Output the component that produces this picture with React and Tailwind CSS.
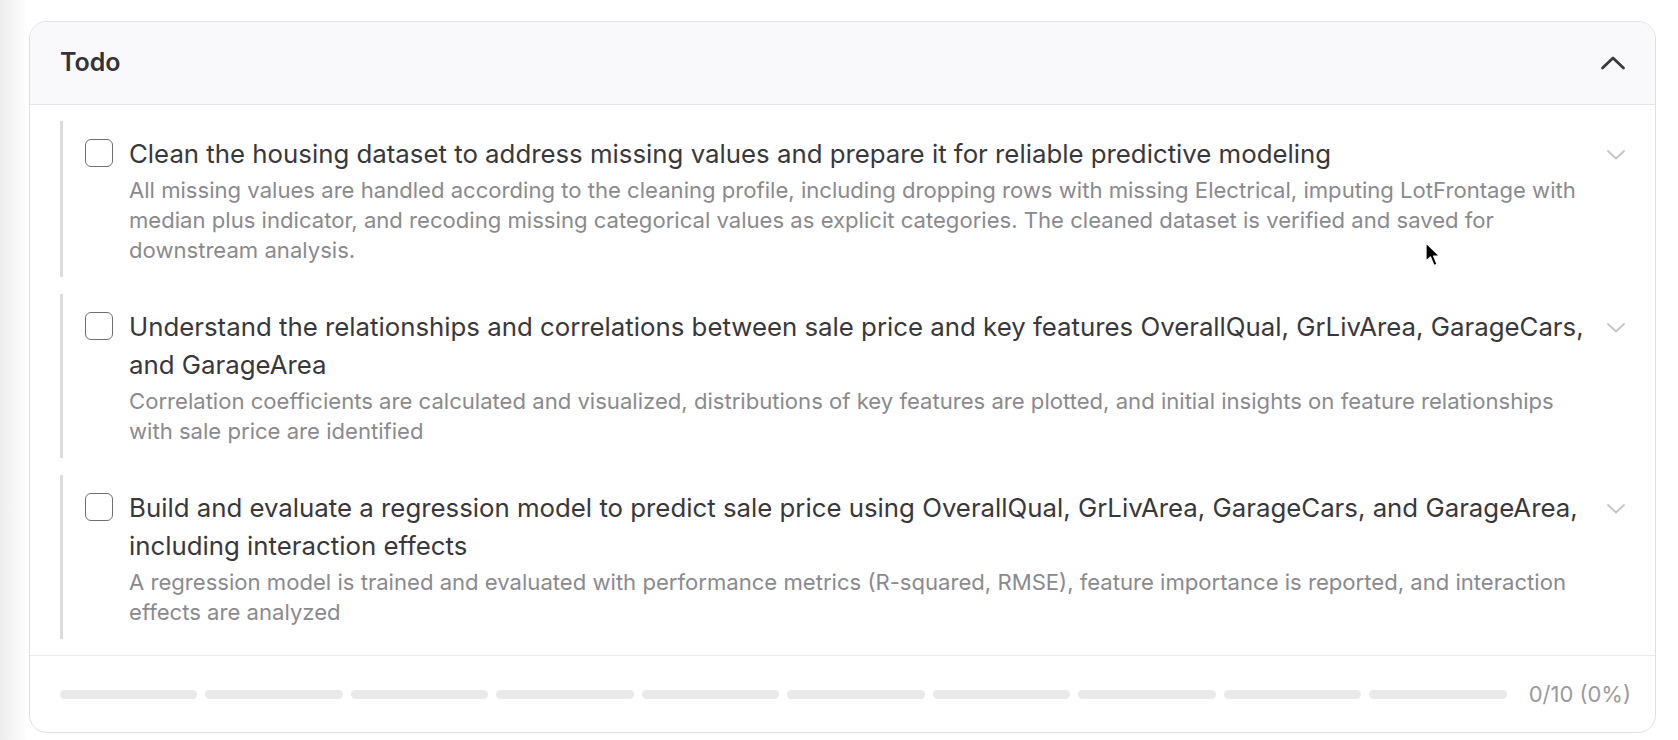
import React from "react";

const items = [
  {
    title:
      "Clean the housing dataset to address missing values and prepare it for reliable predictive modeling",
    desc:
      "All missing values are handled according to the cleaning profile, including dropping rows with missing Electrical, imputing LotFrontage with median plus indicator, and recoding missing categorical values as explicit categories. The cleaned dataset is verified and saved for downstream analysis.",
  },
  {
    title:
      "Understand the relationships and correlations between sale price and key features OverallQual, GrLivArea, GarageCars, and GarageArea",
    desc:
      "Correlation coefficients are calculated and visualized, distributions of key features are plotted, and initial insights on feature relationships with sale price are identified",
  },
  {
    title:
      "Build and evaluate a regression model to predict sale price using OverallQual, GrLivArea, GarageCars, and GarageArea, including interaction effects",
    desc:
      "A regression model is trained and evaluated with performance metrics (R-squared, RMSE), feature importance is reported, and interaction effects are analyzed",
  },
];

function ChevronDown() {
  return (
    <svg width="20" height="12" viewBox="0 0 20 12" fill="none">
      <path d="M2 2 L10 9.5 L18 2" stroke="#c4c4c8" strokeWidth="1.8" strokeLinecap="round" strokeLinejoin="round" />
    </svg>
  );
}

function ChevronUp() {
  return (
    <svg width="26" height="16" viewBox="0 0 26 16" fill="none">
      <path d="M2.5 13 L13 3 L23.5 13" stroke="#3a3a3e" strokeWidth="2.8" strokeLinecap="round" strokeLinejoin="round" />
    </svg>
  );
}

function Cursor() {
  return (
    <svg width="18" height="26" viewBox="0 0 18 26">
      <path d="M1 1 L1 19 L5.5 15 L9 23.5 L12 22.2 L8.6 14 L14.5 14 Z" fill="#000" stroke="#fff" strokeWidth="1.2" strokeLinejoin="round" />
    </svg>
  );
}

export default function App() {
  return (
    <div
      className="relative min-h-[740px] w-[1678px] bg-[linear-gradient(to_right,#ececec,#fafafa_20px,#ffffff_28px)] pl-[29px] pr-[22px] pt-[21px]"
      style={{ fontFamily: "Inter, 'Noto Sans', sans-serif" }}
    >
      <div className="overflow-hidden rounded-[18px] border border-[#e0e0e3] bg-white">
        <div className="flex h-[83px] items-center justify-between border-b border-[#e6e6e9] bg-[#f9f9fb] pl-[30px] pr-[29px]">
          <span className="text-[25px] font-semibold text-[#333336]">Todo</span>
          <ChevronUp />
        </div>

        <div className="flex flex-col gap-[17px] pl-[30px] pr-[29px] pt-[16px] pb-[16px]">
          {items.map((it, i) => (
            <div key={i} className="flex border-l-[3px] border-[#dcdcde] pb-[12px] pl-[22px] pt-[14px]">
              <div className="mt-[4px] h-[28px] w-[28px] shrink-0 rounded-[6px] border-[1.5px] border-[#707074] bg-white" />
              <div className="ml-[16px] min-w-0 flex-1">
                <div className="text-[25.8px] font-normal leading-[38px] text-[#38383c]">{it.title}</div>
                <div className="mt-[2px] text-[22.1px] leading-[30px] text-[#8a8a8e]">{it.desc}</div>
              </div>
              <div className="ml-[14px] mt-[14px] shrink-0">
                <ChevronDown />
              </div>
            </div>
          ))}
        </div>

        <div className="flex h-[77px] items-center gap-[22px] border-t border-[#e8e8ea] pl-[30px] pr-[24px]">
          <div className="flex flex-1 gap-[8px]">
            {Array.from({ length: 10 }).map((_, i) => (
              <div key={i} className="h-[9px] flex-1 rounded-full bg-[#e9e9eb]" />
            ))}
          </div>
          <span className="text-[22px] text-[#9a9a9e]">0/10 (0%)</span>
        </div>
      </div>

      <div className="absolute left-[1425px] top-[242px]">
        <Cursor />
      </div>
    </div>
  );
}
